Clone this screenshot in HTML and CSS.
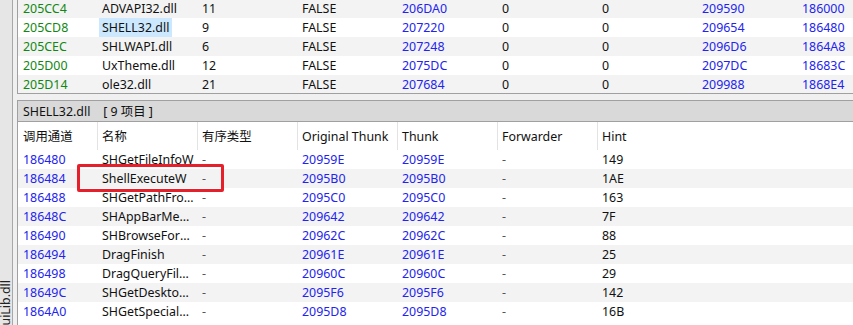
FILE: index.html
```html
<!DOCTYPE html>
<html lang="zh-CN">
<head>
  <meta charset="UTF-8" />
  <title>Import Viewer</title>
  <link rel="stylesheet" href="styles.css">
</head>
<body>
  <div class="side">
    <span class="side-label">DuiLib.dll</span>
  </div>
  <div class="main">
    <div class="modules">
      <div class="row">
        <span class="green">205CC4</span><span>ADVAPI32.dll</span><span>11</span><span>FALSE</span>
        <span class="blue">206DA0</span><span>0</span><span>0</span><span class="blue">209590</span><span class="blue">186000</span>
      </div>
      <div class="row">
        <span class="green">205CD8</span><span><em class="selected">SHELL32.dll</em></span><span>9</span><span>FALSE</span>
        <span class="blue">207220</span><span>0</span><span>0</span><span class="blue">209654</span><span class="blue">186480</span>
      </div>
      <div class="row">
        <span class="green">205CEC</span><span>SHLWAPI.dll</span><span>6</span><span>FALSE</span>
        <span class="blue">207248</span><span>0</span><span>0</span><span class="blue">2096D6</span><span class="blue">1864A8</span>
      </div>
      <div class="row">
        <span class="green">205D00</span><span>UxTheme.dll</span><span>12</span><span>FALSE</span>
        <span class="blue">2075DC</span><span>0</span><span>0</span><span class="blue">2097DC</span><span class="blue">18683C</span>
      </div>
      <div class="row">
        <span class="green">205D14</span><span>ole32.dll</span><span>21</span><span>FALSE</span>
        <span class="blue">207684</span><span>0</span><span>0</span><span class="blue">209988</span><span class="blue">1868E4</span>
      </div>
    </div>

    <div class="detail">
      <div class="detail-title">SHELL32.dll&nbsp;&nbsp;&nbsp; [ 9 项目 ]</div>
      <div class="funcs">
        <div class="row head">
          <span>调用通道</span><span>名称</span><span>有序类型</span><span>Original Thunk</span>
          <span>Thunk</span><span>Forwarder</span><span>Hint</span>
        </div>
        <div id="func-rows"></div>
        <div class="mark"></div>
      </div>
    </div>
  </div>

  <script>
    const funcs = [
      ['186480', 'SHGetFileInfoW', '20959E', '20959E', '149'],
      ['186484', 'ShellExecuteW', '2095B0', '2095B0', '1AE'],
      ['186488', 'SHGetPathFromIDListW', '2095C0', '2095C0', '163'],
      ['18648C', 'SHAppBarMessage', '209642', '209642', '7F'],
      ['186490', 'SHBrowseForFolderW', '20962C', '20962C', '88'],
      ['186494', 'DragFinish', '20961E', '20961E', '25'],
      ['186498', 'DragQueryFileW', '20960C', '20960C', '29'],
      ['18649C', 'SHGetDesktopFolder', '2095F6', '2095F6', '142'],
      ['1864A0', 'SHGetSpecialFolderPathW', '2095D8', '2095D8', '16B']
    ];

    const list = document.getElementById('func-rows');
    funcs.forEach(f => {
      const div = document.createElement('div');
      div.className = 'row';
      div.innerHTML = `
        <span class="blue">${f[0]}</span><span class="name">${f[1]}</span><span class="dash">-</span>
        <span class="blue">${f[2]}</span><span class="blue">${f[3]}</span><span class="dash">-</span><span>${f[4]}</span>
      `;
      list.appendChild(div);
    });
  </script>
</body>
</html>
```

FILE: styles.css
```css
* {
  box-sizing: border-box;
}
html, body {
  margin: 0;
  height: 325px;
  overflow: hidden;
}
body {
  display: flex;
  font-family: 'Noto Sans', 'Noto Sans CJK SC', sans-serif;
  font-size: 12.4px;
  color: #111;
  background: #f0f0f0;
}
.side {
  width: 13px;
  flex-shrink: 0;
  background: #e6e6e6;
  border-right: 1px solid #a8a8a8;
  display: flex;
  flex-direction: column;
  justify-content: flex-end;
  overflow: hidden;
}
.side-label {
  writing-mode: vertical-rl;
  transform: rotate(180deg);
  color: #222;
  line-height: 12px;
  margin-bottom: -10px;
}
.main {
  flex: 1;
  padding-left: 4px;
  display: flex;
  flex-direction: column;
  min-width: 0;
}
.row {
  display: grid;
  grid-template-columns: 80px repeat(8, 100px);
  height: 19px;
  line-height: 19px;
  white-space: nowrap;
}
.row span {
  padding-left: 4px;
  overflow: hidden;
  text-overflow: ellipsis;
}
.row span:first-child {
  padding-left: 5px;
}
.modules {
  background: #fff;
  border-left: 1px solid #a0a0a0;
  border-bottom: 1px solid #a0a0a0;
  margin-top: -1px;
  height: 95px;
  overflow: hidden;
}
.modules .row:nth-child(odd) {
  background: #f3f3f3;
}
.green {
  color: #118811;
}
.blue {
  color: #2323f0;
}
.selected {
  font-style: normal;
  background: #cce8ff;
  padding: 0 3px;
  margin-left: -3px;
  display: inline-block;
}
.detail {
  margin-top: 6px;
  flex: 1;
  display: flex;
  flex-direction: column;
  border-left: 1px solid #a0a0a0;
}
.detail-title {
  background: #d9d9d9;
  border-top: 1px solid #a0a0a0;
  border-bottom: 1px solid #a0a0a0;
  height: 22px;
  line-height: 22px;
  padding-left: 5px;
}
.funcs {
  flex: 1;
  background: #fff;
  position: relative;
}
.funcs .row {
  grid-template-columns: 80px repeat(6, 100px) 1fr;
}
.funcs .row.head {
  height: 28px;
  line-height: 30px;
}
.head span {
  border-right: 1px solid #e3e3e3;
}
.head span:last-child {
  border-right: none;
}
#func-rows .row:nth-child(even) {
  background: #f3f3f3;
}
.name {
  padding-right: 4px;
}
.dash {
  color: #555;
}
.mark {
  position: absolute;
  left: 59px;
  top: 42px;
  width: 147px;
  height: 28px;
  border: 3px solid #e5202a;
  border-radius: 2px;
}
```
